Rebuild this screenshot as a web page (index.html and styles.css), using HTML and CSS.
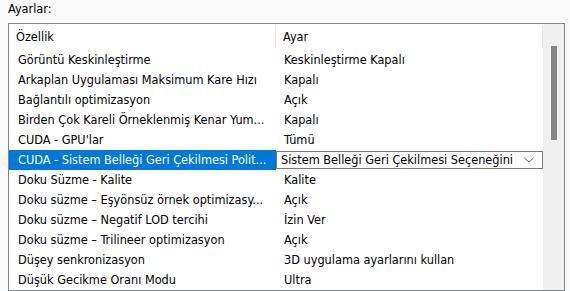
FILE: index.html
```html
<!DOCTYPE html>
<html lang="tr">
<head>
  <meta charset="UTF-8">
  <title>Ayarlar</title>
  <link rel="stylesheet" href="styles.css">
</head>
<body>
  <div class="baslik">Ayarlar:</div>

  <div class="liste">
    <div class="icerik">
      <div class="satir ust">
        <div class="hucre ad">Özellik</div>
        <div class="hucre deger">Ayar</div>
      </div>
      <div class="satir"><div class="hucre ad">Görüntü Keskinleştirme</div><div class="hucre deger">Keskinleştirme Kapalı</div></div>
      <div class="satir"><div class="hucre ad">Arkaplan Uygulaması Maksimum Kare Hızı</div><div class="hucre deger">Kapalı</div></div>
      <div class="satir"><div class="hucre ad">Bağlantılı optimizasyon</div><div class="hucre deger">Açık</div></div>
      <div class="satir"><div class="hucre ad">Birden Çok Kareli Örneklenmiş Kenar Yum...</div><div class="hucre deger">Kapalı</div></div>
      <div class="satir"><div class="hucre ad">CUDA - GPU'lar</div><div class="hucre deger">Tümü</div></div>
      <div class="satir secili">
        <div class="hucre ad">CUDA - Sistem Belleği Geri Çekilmesi Polit...</div>
        <div class="hucre secim">
          <span class="secim-metin">Sistem Belleği Geri Çekilmesi Seçeneğini</span>
          <svg class="ok" width="12" height="8" viewBox="0 0 12 8"><polyline points="1.5,2 6,6 10.5,2" fill="none" stroke="#606060" stroke-width="1"/></svg>
        </div>
      </div>
      <div class="satir"><div class="hucre ad">Doku Süzme - Kalite</div><div class="hucre deger">Kalite</div></div>
      <div class="satir"><div class="hucre ad">Doku süzme – Eşyönsüz örnek optimizasy...</div><div class="hucre deger">Açık</div></div>
      <div class="satir"><div class="hucre ad">Doku süzme – Negatif LOD tercihi</div><div class="hucre deger">İzin Ver</div></div>
      <div class="satir"><div class="hucre ad">Doku süzme – Trilineer optimizasyon</div><div class="hucre deger">Açık</div></div>
      <div class="satir"><div class="hucre ad">Düşey senkronizasyon</div><div class="hucre deger">3D uygulama ayarlarını kullan</div></div>
      <div class="satir"><div class="hucre ad">Düşük Gecikme Oranı Modu</div><div class="hucre deger">Ultra</div></div>
    </div>
    <div class="kaydirma">
      <div class="tutamac"></div>
    </div>
  </div>
</body>
</html>
```

FILE: styles.css
```css
body {
  margin: 0;
  background: #f9f9f9;
  font-family: "DejaVu Sans Condensed", "DejaVu Sans", sans-serif;
  font-size: 12.6px;
  color: #000;
  overflow: hidden;
}

.baslik {
  height: 23px;
  line-height: 17px;
  padding-left: 8px;
}

.liste {
  display: flex;
  margin-left: 8px;
  width: 555px;
  height: 266px;
  border: 1px solid #828790;
  background: #fff;
  overflow: hidden;
}

.icerik {
  flex: 1;
  min-width: 0;
}

.satir {
  display: flex;
  height: 20px;
  line-height: 20px;
}

.satir.ust {
  height: 26px;
  line-height: 26px;
}

.hucre {
  overflow: hidden;
  white-space: nowrap;
}

.ad {
  width: 258px;
  padding-left: 9px;
}

.deger {
  flex: 1;
  padding-left: 8px;
}

.ust .ad {
  padding-left: 7px;
  width: 259px;
  border-right: 1px solid #e5e5e5;
  margin: 1px 0 2px;
  line-height: 23px;
}

.ust .deger {
  padding-left: 7px;
  border-right: 1px solid #e5e5e5;
  margin: 1px 0 2px;
  line-height: 23px;
}

.secili .ad {
  background: #0078d7;
  color: #fff;
}

.secim {
  flex: 1;
  display: flex;
  align-items: center;
  border: 1px solid #7a7a7a;
  margin: 1px 0;
  line-height: 16px;
  padding-left: 4px;
}

.secim-metin {
  flex: 1;
  overflow: hidden;
}

.ok {
  flex: none;
  margin: 0 7px 0 6px;
}

.kaydirma {
  flex: none;
  width: 21px;
  background: #f0f0f0;
  display: flex;
  justify-content: center;
  padding-top: 22px;
}

.tutamac {
  width: 6px;
  height: 94px;
  background: #858585;
}
```
